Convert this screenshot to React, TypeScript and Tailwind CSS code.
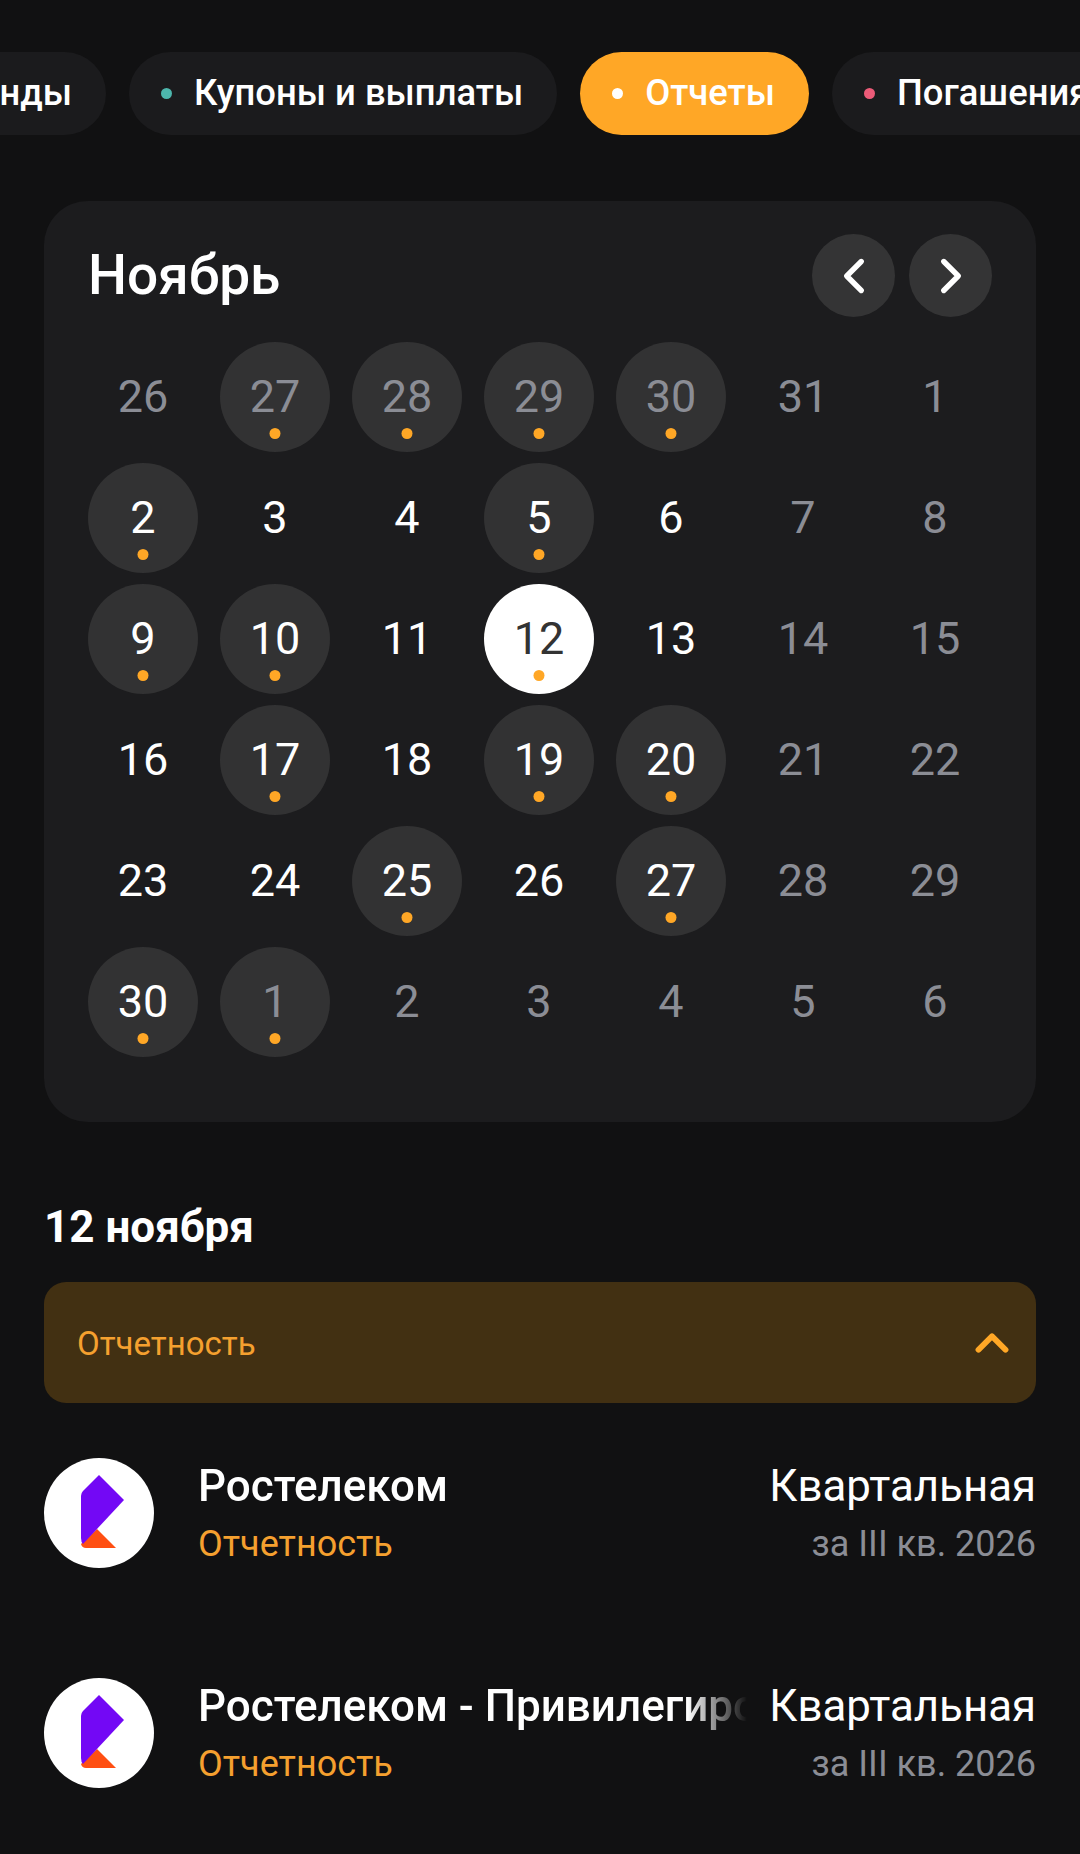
import React from "react";
import { ChevronLeft, ChevronRight, ChevronUp } from "lucide-react";

type Day = { n: number; dim?: boolean; mark?: boolean; selected?: boolean };

const d = (n: number): Day => ({ n, dim: true });
const m = (n: number): Day => ({ n, mark: true });
const dm = (n: number): Day => ({ n, dim: true, mark: true });
const p = (n: number): Day => ({ n });

const days: Day[] = [
  d(26), dm(27), dm(28), dm(29), dm(30), d(31), d(1),
  m(2), p(3), p(4), m(5), p(6), d(7), d(8),
  m(9), m(10), p(11), { n: 12, mark: true, selected: true }, p(13), d(14), d(15),
  p(16), m(17), p(18), m(19), m(20), d(21), d(22),
  p(23), p(24), m(25), p(26), m(27), d(28), d(29),
  m(30), dm(1), d(2), d(3), d(4), d(5), d(6),
];

function Filter({ label, dot, active }: { label: string; dot: string; active?: boolean }) {
  return (
    <div
      className={`flex h-[83px] items-center gap-[22px] rounded-full pl-[32px] pr-[34px] ${
        active ? "bg-[#ffa726]" : "bg-[#1b1b1d]"
      }`}
    >
      <span className={`h-[11px] w-[11px] rounded-full ${dot}`} />
      <span className="text-[36.4px] font-medium text-white">{label}</span>
    </div>
  );
}

function DayCell({ day }: { day: Day }) {
  let circle = "";
  if (day.selected) circle = "bg-white text-[#333333]";
  else if (day.mark) circle = "bg-[#323233]";

  let tone = "text-white";
  if (day.selected) tone = "text-[#333333]";
  else if (day.dim) tone = "text-[#8b8d95]";

  return (
    <div className="flex justify-center">
      <div className={`relative flex h-[110px] w-[110px] items-center justify-center rounded-full ${circle}`}>
        <span className={`text-[45px] ${tone}`}>{day.n}</span>
        {day.mark && (
          <span className="absolute bottom-[13px] left-1/2 h-[11px] w-[11px] -translate-x-1/2 rounded-full bg-[#ffa726]" />
        )}
      </div>
    </div>
  );
}

function RostelecomLogo() {
  return (
    <div className="h-[110px] w-[110px] shrink-0 rounded-full bg-white">
      <svg viewBox="0 0 110 110" className="h-full w-full">
        <path d="M53 71 L72 90 L42 90 Q38 90 37 86 Z" fill="#ff4f12" />
        <path d="M55 17 L80 42 L39 86 Q37 84 37 80 L37 38 Q37 35 39 33 Z" fill="#7308f5" />
      </svg>
    </div>
  );
}

function ReportRow({ name }: { name: string }) {
  return (
    <div className="flex h-[110px] items-center">
      <RostelecomLogo />
      <div className="ml-[44px] min-w-0 flex-1 pt-[3px]">
        <div className="overflow-hidden whitespace-nowrap text-[44px] leading-[58px] font-medium text-white [mask-image:linear-gradient(to_left,transparent,black_60px)]">
          {name}
        </div>
        <div className="text-[36px] leading-[58px] text-[#f5a02f]">Отчетность</div>
      </div>
      <div className="ml-[22px] shrink-0 pt-[3px] text-right">
        <div className="text-[43.8px] leading-[58px] text-white">Квартальная</div>
        <div className="text-[36px] leading-[58px] text-[#8b8d95]">за III кв. 2026</div>
      </div>
    </div>
  );
}

export default function App() {
  return (
    <div className="min-h-[1854px] overflow-hidden bg-[#111112] font-['Roboto',sans-serif]">
      {/* Event type filters, scrolled sideways */}
      <div className="overflow-hidden pt-[52px]">
        <div className="-ml-[197px] flex w-max gap-[23px]">
          <Filter label="Дивиденды" dot="bg-[#5b8def]" />
          <Filter label="Купоны и выплаты" dot="bg-[#4db6ac]" />
          <Filter label="Отчеты" dot="bg-white" active />
          <Filter label="Погашения" dot="bg-[#ec5b78]" />
        </div>
      </div>

      <div className="px-[44px]">
        {/* Month calendar */}
        <div className="mt-[66px] rounded-[44px] bg-[#1c1c1e] pb-[65px] pl-[33px] pr-[35px] pt-[33px]">
          <div className="flex h-[83px] items-center justify-between">
            <h1 className="ml-[11px] text-[55px] font-medium text-white">Ноябрь</h1>
            <div className="mr-[9px] flex gap-[14px]">
              <button className="flex h-[83px] w-[83px] items-center justify-center rounded-full bg-[#343435] text-white">
                <ChevronLeft className="h-[58px] w-[58px]" strokeWidth={2.2} />
              </button>
              <button className="flex h-[83px] w-[83px] items-center justify-center rounded-full bg-[#343435] text-white">
                <ChevronRight className="h-[58px] w-[58px]" strokeWidth={2.2} />
              </button>
            </div>
          </div>
          <div className="mt-[25px] grid grid-cols-7 gap-y-[11px]">
            {days.map((day, i) => (
              <DayCell key={i} day={day} />
            ))}
          </div>
        </div>

        {/* Selected day */}
        <h2 className="mt-[80px] text-[44px] leading-[50px] font-bold text-white">12 ноября</h2>
        <div className="mt-[30px] flex h-[121px] items-center justify-between rounded-[22px] bg-[#423012] pl-[33px] pr-[17px]">
          <span className="pt-[3px] text-[33px] text-[#f5a02f]">Отчетность</span>
          <ChevronUp className="h-[54px] w-[54px] text-[#ffa726]" strokeWidth={2.6} />
        </div>

        <div className="mt-[55px] flex flex-col gap-[110px]">
          <ReportRow name="Ростелеком" />
          <ReportRow name="Ростелеком - Привилегированные акции" />
        </div>
      </div>
    </div>
  );
}
